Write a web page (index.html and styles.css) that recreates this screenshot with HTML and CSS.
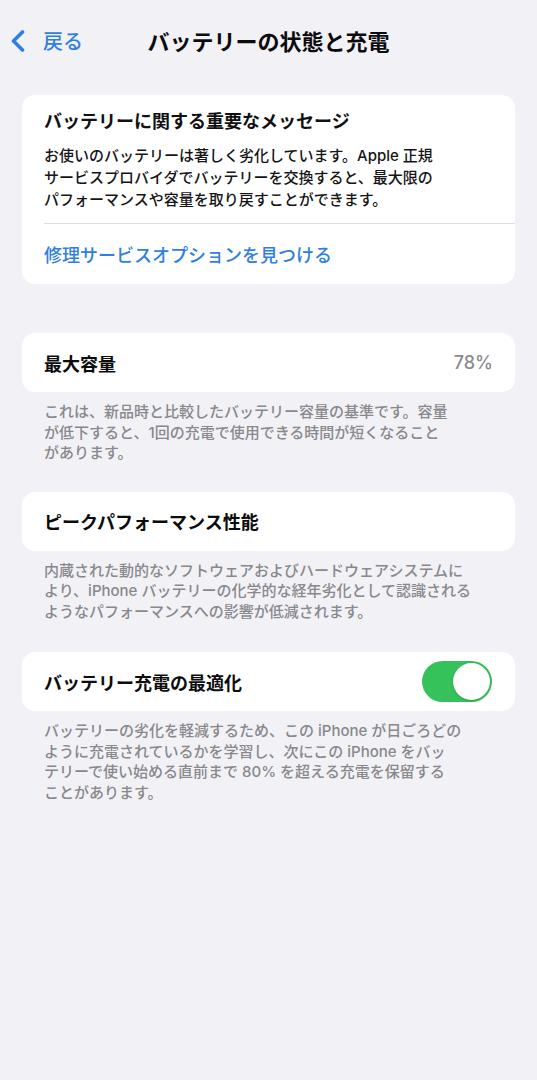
FILE: index.html
```html
<!DOCTYPE html>
<html lang="ja">
<head>
<meta charset="utf-8">
<title>バッテリーの状態と充電</title>
<link rel="stylesheet" href="styles.css">
</head>
<body>
<div class="screen">
  <header class="nav">
    <a class="back" href="#">
      <svg class="chevron" width="14" height="24" viewBox="0 0 14 24" aria-hidden="true">
        <path d="M11.5 3 L2.5 12 L11.5 21" fill="none" stroke="currentColor" stroke-width="3.6" stroke-linecap="round" stroke-linejoin="round"/>
      </svg>
      <span>戻る</span>
    </a>
    <h1 class="nav-title">バッテリーの状態と充電</h1>
    <span class="nav-spacer"></span>
  </header>

  <main class="content">
    <section class="card message">
      <h2 class="message-title">バッテリーに関する重要なメッセージ</h2>
      <p class="message-body">お使いのバッテリーは著しく劣化しています。Apple 正規<br>サービスプロバイダでバッテリーを交換すると、最大限の<br>パフォーマンスや容量を取り戻すことができます。</p>
      <div class="divider"></div>
      <a class="link-row" href="#">修理サービスオプションを見つける</a>
    </section>

    <section class="group first">
      <div class="card row">
        <span class="row-label">最大容量</span>
        <span class="row-value">78%</span>
      </div>
      <p class="footnote">これは、新品時と比較したバッテリー容量の基準です。容量<br>が低下すると、1回の充電で使用できる時間が短くなること<br>があります。</p>
    </section>

    <section class="group">
      <div class="card row">
        <span class="row-label">ピークパフォーマンス性能</span>
      </div>
      <p class="footnote">内蔵された動的なソフトウェアおよびハードウェアシステムに<br>より、iPhone バッテリーの化学的な経年劣化として認識される<br>ようなパフォーマンスへの影響が低減されます。</p>
    </section>

    <section class="group last">
      <div class="card row">
        <span class="row-label">バッテリー充電の最適化</span>
        <span class="switch on"><span class="knob"></span></span>
      </div>
      <p class="footnote">バッテリーの劣化を軽減するため、この iPhone が日ごろどの<br>ように充電されているかを学習し、次にこの iPhone をバッ<br>テリーで使い始める直前まで 80% を超える充電を保留する<br>ことがあります。</p>
    </section>
  </main>
</div>
</body>
</html>
```

FILE: styles.css
```css
* {
  box-sizing: border-box;
}

html, body {
  margin: 0;
  padding: 0;
  background: #f2f1f6;
}

body {
  font-family: "Inter", "Noto Sans CJK JP", "Noto Sans", sans-serif;
  color: #111113;
  -webkit-font-smoothing: antialiased;
}

.screen {
  width: 537px;
  min-height: 1080px;
  background: #f2f1f6;
}

/* Navigation bar */
.nav {
  height: 80px;
  display: grid;
  grid-template-columns: 1fr auto 1fr;
  align-items: center;
  padding: 0 0 0 11px;
}

.back {
  display: flex;
  align-items: center;
  gap: 18px;
  color: #2f7fe3;
  text-decoration: none;
  font-size: 20px;
  font-weight: 500;
  justify-self: start;
  margin-top: 1px;
}

.chevron {
  display: block;
}

.nav-title {
  margin: 0;
  font-size: 22px;
  font-weight: 700;
  color: #0c0c0e;
  letter-spacing: 0;
  white-space: nowrap;
  margin-right: 11px;
}

/* Content */
.content {
  padding: 15px 22px 0;
}

.card {
  background: #ffffff;
  border-radius: 13px;
}

.message {
  padding-top: 14px;
}

.message-title {
  margin: 0;
  padding: 0 22px;
  font-size: 18px;
  line-height: 26px;
  font-weight: 700;
  white-space: nowrap;
}

.message-body {
  margin: 10px 0 0;
  padding: 0 22px;
  font-size: 15px;
  line-height: 22px;
  font-weight: 500;
  color: #151517;
  white-space: nowrap;
}

.divider {
  margin: 12px 0 0 22px;
  height: 1px;
  background: #dcdce0;
}

.link-row {
  display: flex;
  align-items: center;
  height: 60px;
  padding: 0 22px;
  font-size: 18px;
  font-weight: 500;
  color: #2f7fe3;
  text-decoration: none;
  white-space: nowrap;
}

.group {
  margin-top: 28px;
}

.group.first {
  margin-top: 49px;
}

.group.last {
  margin-top: 30px;
}

.row {
  height: 59px;
  display: flex;
  align-items: center;
  justify-content: space-between;
  padding: 0 22px;
}

.row-label {
  font-size: 18px;
  font-weight: 700;
  color: #0c0c0e;
  white-space: nowrap;
}

.row-value {
  font-size: 18px;
  font-weight: 500;
  color: #8a8a8f;
}

.footnote {
  margin: 10px 0 0;
  padding: 0 22px;
  font-size: 15px;
  line-height: 20.5px;
  font-weight: 500;
  color: #88888d;
  white-space: nowrap;
}

/* Switch */
.switch {
  position: relative;
  width: 70px;
  height: 41px;
  border-radius: 21px;
  background: #e5e5ea;
  margin-right: 1px;
}

.switch.on {
  background: #35c25a;
}

.switch .knob {
  position: absolute;
  top: 2px;
  right: 2px;
  width: 37px;
  height: 37px;
  border-radius: 50%;
  background: #ffffff;
  box-shadow: 0 1px 3px rgba(0, 0, 0, 0.18);
}
```
